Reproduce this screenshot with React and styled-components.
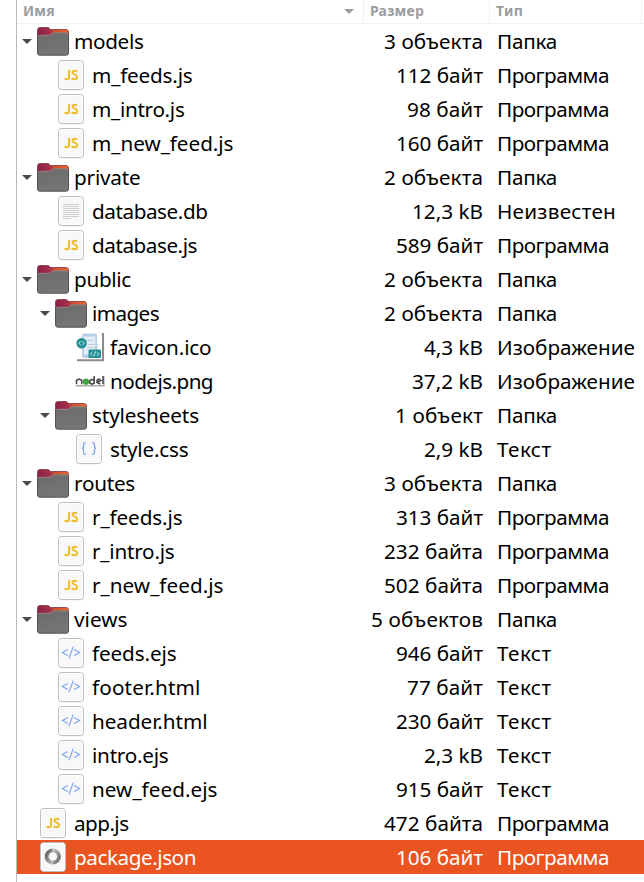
import React, { useLayoutEffect, useRef, useState } from 'react';
import styled, { createGlobalStyle } from 'styled-components';

const GlobalStyle = createGlobalStyle`
  * { box-sizing: border-box; }
  html, body { margin: 0; background: #fff; }
  body { overflow: hidden; font-family: "Noto Sans", "Open Sans", sans-serif; }
`;

const Window = styled.main`
  width: 644px;
  height: 882px;
  padding-left: 16px;
  background: #fff;
`;

const Panel = styled.section`
  height: 100%;
  border-left: 1px solid #b9b9b9;
`;

const columns = '347px 126px 152px 1fr';

const Header = styled.header`
  display: grid;
  grid-template-columns: ${columns};
  height: 24px;
  border-bottom: 1px solid #f1f1f1;
`;

const HeaderCell = styled.div`
  display: flex;
  align-items: center;
  justify-content: space-between;
  padding: 0 9px 0 6px;
  border-right: 1px solid #f1f1f1;
  color: #9c9c9c;
  font-size: 14px;
  font-weight: 700;
  line-height: 20px;
  white-space: nowrap;
`;

const Row = styled.div`
  display: grid;
  grid-template-columns: ${columns};
  height: 34px;
  background: ${(p) => (p.$selected ? '#e95420' : 'transparent')};
  color: ${(p) => (p.$selected ? '#fff' : '#000')};
  font-size: 20.7px;
  line-height: 34px;
  white-space: pre;
`;

const NameCell = styled.div`
  display: flex;
  align-items: center;
  padding-left: ${(p) => 4 + p.$depth * 18}px;
`;

const Expander = styled.div`
  display: flex;
  justify-content: center;
  width: 12px;
  margin-right: 4px;
`;

const IconSlot = styled.div`
  display: flex;
  justify-content: center;
  align-items: center;
  width: 32px;
  height: 34px;
  margin-right: 5px;
`;

const SizeCell = styled.div`
  display: flex;
  justify-content: flex-end;
  padding-right: 7px;
`;

const TypeCell = styled.div`
  display: flex;
  padding-left: 7px;
`;

const Label = styled.span`
  display: block;
  flex: none;
  height: 34px;
`;

const HeaderLabel = styled(Label)`
  height: 22px;
`;

const Svg = styled.svg`
  display: block;
  flex: none;
  overflow: visible;
`;

// Spreads the glyphs evenly so that the text takes up the given width.
function FitText({ as: Tag = Label, width, children }) {
  const ref = useRef(null);
  const [spacing, setSpacing] = useState(0);
  useLayoutEffect(() => {
    const natural = ref.current.getBoundingClientRect().width;
    setSpacing((width - natural) / children.length);
  }, [width, children]);
  return (
    <Tag ref={ref} style={{ letterSpacing: `${spacing}px` }}>
      {children}
    </Tag>
  );
}

const Triangle = ({ color }) => (
  <Svg width="10" height="5" viewBox="0 0 10 5">
    <path d="M0 0H10L5 5Z" fill={color} />
  </Svg>
);

const FolderIcon = () => (
  <Svg width="32" height="28" viewBox="0 0 32 28">
    <defs>
      <linearGradient id="folderBack" x1="0" x2="1" y1="0" y2="0">
        <stop offset="0" stopColor="#8a2048" />
        <stop offset="0.4" stopColor="#a5304a" />
        <stop offset="0.55" stopColor="#d24d33" />
        <stop offset="1" stopColor="#ee6a2c" />
      </linearGradient>
      <linearGradient id="folderFront" x1="0" x2="0.4" y1="0" y2="1">
        <stop offset="0" stopColor="#6b6b6b" />
        <stop offset="1" stopColor="#757575" />
      </linearGradient>
    </defs>
    <path d="M.5 3Q.5.5 3 .5H10.5Q12.3.5 13 2L13.3 2.5H29Q31.5 2.5 31.5 5V20H.5Z" fill="url(#folderBack)" stroke="#7c3540" strokeWidth=".8" />
    <path d="M.5 10Q.5 8 2.5 8H12Q13.5 8 14.5 6.8L15.2 6.2Q16 5.5 17.3 5.5H29.5Q31.5 5.5 31.5 7.5V26Q31.5 28.2 29.3 28.2H2.7Q.5 28.2.5 26Z" fill="url(#folderFront)" />
    <path d="M.5 9V26Q.5 28.2 2.7 28.2H29.3Q31.5 28.2 31.5 26V7" fill="none" stroke="#555" />
    <path d="M1.2 8.9Q1.6 8.3 2.7 8.3H12.2Q13.8 8.3 14.8 7.1L15.4 6.5Q16.1 5.9 17.4 5.9H29.4Q30.6 5.9 31 6.8" fill="none" stroke="#9c8a86" strokeWidth=".8" />
  </Svg>
);

const Sheet = ({ children }) => (
  <Svg width="26" height="30" viewBox="0 0 26 30">
    <rect x="0" y="1" width="26" height="29.5" rx="3.8" fill="#00000012" />
    <rect x=".5" y=".5" width="25" height="29" rx="3.3" fill="#f8f8f8" stroke="#bdbdbd" />
    <rect x="1.5" y="1.5" width="23" height="27" rx="2.5" fill="none" stroke="#fff" />
    {children}
  </Svg>
);

const ScriptIcon = () => (
  <Sheet>
    <g fill="none" stroke="#ecbd2c" strokeWidth="2">
      <path d="M11.1 10V16.8Q11.1 19.3 8.8 19.3Q7.5 19.3 6.6 18.3" />
      <path d="M19.1 11.6Q18 10.8 16.6 10.8Q14.5 10.8 14.5 12.5Q14.5 13.8 16.7 14.6Q19.1 15.4 19.1 17Q19.1 19.3 16.5 19.3Q14.8 19.3 13.6 18.3" />
    </g>
  </Sheet>
);

const PlainIcon = () => (
  <Sheet>
    <path d="M5 8.5H21M5 10.5H21M5 12.5H21M5 14.5H21M5 16.5H21M5 18.5H21M5 20.5H21M5 22.5H13" stroke="#cfcfcf" />
  </Sheet>
);

const MarkupIcon = () => (
  <Sheet>
    <g fill="none" stroke="#7fa5f5" strokeWidth="1.15">
      <path d="M9.8 11.5L4.4 14.4L9.8 17.4M16.2 11.5L21.6 14.4L16.2 17.4" />
      <path d="M15.2 8.8L10.9 20.2" />
    </g>
  </Sheet>
);

const StyleIcon = () => (
  <Sheet>
    <g fill="none" stroke="#7fa5f5" strokeWidth="1.3">
      <path d="M9.7 8.6Q7.6 8.4 7.6 10.5V12.3Q7.6 14.4 5.8 14.4Q7.6 14.4 7.6 16.5V18.4Q7.6 20.5 9.7 20.3" />
      <path d="M16.3 8.6Q18.4 8.4 18.4 10.5V12.3Q18.4 14.4 20.2 14.4Q18.4 14.4 18.4 16.5V18.4Q18.4 20.5 16.3 20.3" />
    </g>
  </Sheet>
);

const JsonIcon = () => (
  <Sheet>
    <defs>
      <linearGradient id="ringA" x1="0" x2="1" y1="0" y2="1">
        <stop offset="0" stopColor="#5a5a5a" />
        <stop offset="1" stopColor="#c5c5c5" />
      </linearGradient>
      <linearGradient id="ringB" x1="0" x2="1" y1="0" y2="1">
        <stop offset="0" stopColor="#c8c8c8" />
        <stop offset="1" stopColor="#6a6a6a" />
      </linearGradient>
    </defs>
    <g fill="none" strokeWidth="3.8">
      <path d="M12.7 8.3A6.2 6.2 0 0 0 13 20.7" stroke="url(#ringA)" />
      <path d="M12.7 8.3A6.2 6.2 0 0 1 13 20.7" stroke="url(#ringB)" />
    </g>
  </Sheet>
);

const FaviconIcon = () => (
  <Svg width="28" height="30" viewBox="-1 0 28 30">
    <path d="M27 1V28.2H1" fill="none" stroke="#777" strokeWidth="2.1" opacity=".85" />
    <rect x="0" y="0" width="26" height="27" fill="#fff" />
    <rect x="6" y="1.5" width="15" height="24.5" rx="2" fill="#b8d0e5" />
    <rect x="7.7" y="4.5" width="11.6" height="18" fill="#e5eef6" />
    <path d="M10 8.5H17M12 12.5H22M11 15.5H22" stroke="#bdcdda" />
    <circle cx="5.6" cy="11.3" r="5.2" fill="#248f94" />
    <path d="M4.8 9.4L2.9 11.3L4.8 13.2M6.4 9.4L8.3 11.3L6.4 13.2" fill="none" stroke="#d9f1ef" />
    <rect x="12.5" y="17.5" width="12.5" height="8.5" rx="1" fill="#248f94" />
    <path d="M16.5 20L14.5 21.8L16.5 23.6M21 20L23 21.8L21 23.6M19.8 19.2L17.8 24.3" fill="none" stroke="#d9f1ef" strokeWidth=".9" />
  </Svg>
);

const NodeIcon = () => (
  <Svg width="28" height="12" viewBox="0 0 28 12">
    <path d="M28.9 1V10.7H1" fill="none" stroke="#aaa" strokeWidth="1.4" />
    <path d="M0 0H28V9.8H0Z" fill="#fff" />
    <g fill="none" stroke="#444" strokeWidth="1.5">
      <path d="M1.5 9.2V5.3L4.2 4L6.8 5.3V9.2" />
      <path d="M19.2 1V8.2L16.8 9.2L14.8 8V5.6L16.8 4.4L19.2 5.5" />
      <path d="M25.3 9L22 7.5V5.3L24 4.2L25.9 5.4L22.7 7" />
      <path d="M28 1V9" />
    </g>
    <circle cx="11" cy="6.7" r="3.1" fill="#3ea63f" />
  </Svg>
);

const icons = {
  folder: FolderIcon,
  js: ScriptIcon,
  plain: PlainIcon,
  markup: MarkupIcon,
  css: StyleIcon,
  json: JsonIcon,
  favicon: FaviconIcon,
  node: NodeIcon,
};

const typeWidths = { Папка: 60, Программа: 112, Неизвестен: 119, Изображение: 138, Текст: 54.5 };

// depth, icon, name, name width, size, size width, type
const files = [
  [0, 'folder', 'models', 69.5, '3 объекта', 99, 'Папка'],
  [1, 'js', 'm_feeds.js', 100.5, '112 байт', 87, 'Программа'],
  [1, 'js', 'm_intro.js', 92.5, '98 байт', 76, 'Программа'],
  [1, 'js', 'm_new_feed.js', 141.5, '160 байт', 87, 'Программа'],
  [0, 'folder', 'private', 66.5, '2 объекта', 99, 'Папка'],
  [1, 'plain', 'database.db', 115.5, '12,3 kB', 71, 'Неизвестен'],
  [1, 'js', 'database.js', 105, '589 байт', 87, 'Программа'],
  [0, 'folder', 'public', 57, '2 объекта', 99, 'Папка'],
  [1, 'folder', 'images', 67, '2 объекта', 99, 'Папка'],
  [2, 'favicon', 'favicon.ico', 101.5, '4,3 kB', 59, 'Изображение'],
  [2, 'node', 'nodejs.png', 103, '37,2 kB', 71, 'Изображение'],
  [1, 'folder', 'stylesheets', 107, '1 объект', 88, 'Папка'],
  [2, 'css', 'style.css', 78.5, '2,9 kB', 59, 'Текст'],
  [0, 'folder', 'routes', 61, '3 объекта', 99, 'Папка'],
  [1, 'js', 'r_feeds.js', 90.5, '313 байт', 87, 'Программа'],
  [1, 'js', 'r_intro.js', 82.5, '232 байта', 99, 'Программа'],
  [1, 'js', 'r_new_feed.js', 131.5, '502 байта', 99, 'Программа'],
  [0, 'folder', 'views', 53.5, '5 объектов', 112, 'Папка'],
  [1, 'markup', 'feeds.ejs', 84.5, '946 байт', 87, 'Текст'],
  [1, 'markup', 'footer.html', 108.5, '77 байт', 76, 'Текст'],
  [1, 'markup', 'header.html', 115.5, '230 байт', 87, 'Текст'],
  [1, 'markup', 'intro.ejs', 76.5, '2,3 kB', 59, 'Текст'],
  [1, 'markup', 'new_feed.ejs', 125.5, '915 байт', 87, 'Текст'],
  [0, 'js', 'app.js', 54.5, '472 байта', 99, 'Программа'],
  [0, 'json', 'package.json', 122, '106 байт', 87, 'Программа'],
];

function FileRow({ file, selected }) {
  const [depth, icon, name, nameWidth, size, sizeWidth, type] = file;
  const Icon = icons[icon];
  return (
    <Row $selected={selected}>
      <NameCell $depth={depth}>
        <Expander>{icon === 'folder' && <Triangle color="#4c4c4c" />}</Expander>
        <IconSlot><Icon /></IconSlot>
        <FitText width={nameWidth}>{name}</FitText>
      </NameCell>
      <SizeCell><FitText width={sizeWidth}>{size}</FitText></SizeCell>
      <TypeCell><FitText width={typeWidths[type]}>{type}</FitText></TypeCell>
    </Row>
  );
}

export default function App() {
  return (
    <Window>
      <GlobalStyle />
      <Panel>
        <Header>
          <HeaderCell>
            <FitText as={HeaderLabel} width={32}>Имя</FitText>
            <Triangle color="#9c9c9c" />
          </HeaderCell>
          <HeaderCell><FitText as={HeaderLabel} width={54}>Размер</FitText></HeaderCell>
          <HeaderCell><FitText as={HeaderLabel} width={27}>Тип</FitText></HeaderCell>
        </Header>
        {files.map((file) => (
          <FileRow key={file[2]} file={file} selected={file[1] === 'json'} />
        ))}
      </Panel>
    </Window>
  );
}
